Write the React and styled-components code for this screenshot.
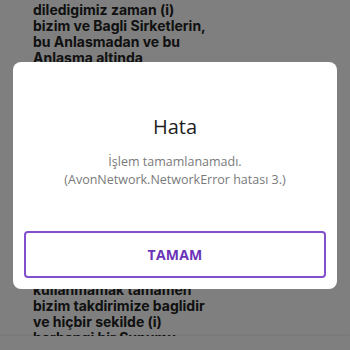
import React from "react";
import styled, { createGlobalStyle } from "styled-components";

const GlobalStyle = createGlobalStyle`
	html, body {
		margin: 0;
		padding: 0;
		background: #ffffff;
		overflow: hidden;
	}
	body {
		font-family: "Open Sans", "Liberation Sans", sans-serif;
	}
`;

const Page = styled.div`
	width: 350px;
	height: 350px;
	overflow: hidden;
	padding: 2px 0 0 33px;
	box-sizing: border-box;
`;

const Paragraph = styled.div`
	font-family: Inter, "Open Sans", sans-serif;
	font-size: 14px;
	font-weight: 700;
	line-height: 16px;
	color: #222222;
	margin-top: ${(p) => p.$gap || 0}px;
`;

const Line = styled.div`
	white-space: nowrap;
`;

const BottomBar = styled.div`
	position: fixed;
	left: 0;
	right: 0;
	bottom: 0;
	height: 14px;
	background: #ffffff;
	box-shadow: 0 -1px 2px rgba(0, 0, 0, 0.08);
`;

const Overlay = styled.div`
	position: fixed;
	inset: 0;
	background: rgba(0, 0, 0, 0.5);
	display: flex;
	align-items: center;
	justify-content: center;
`;

const Dialog = styled.div`
	width: 324px;
	background: #ffffff;
	border-radius: 8px;
	box-sizing: border-box;
	padding: 53px 11px 11px;
	display: flex;
	flex-direction: column;
	align-items: center;
`;

const Title = styled.div`
	font-size: 20px;
	line-height: 24px;
	color: #1e1e1e;
	font-weight: 400;
`;

const Message = styled.div`
	margin-top: 14px;
	font-size: 12.5px;
	line-height: 18px;
	color: #7a7a7a;
	text-align: center;
`;

const Button = styled.button`
	margin-top: 42px;
	width: 100%;
	height: 47px;
	border: 2px solid #8250cc;
	border-radius: 4px;
	background: #ffffff;
	color: #6a33b8;
	font-family: "Open Sans", "Liberation Sans", sans-serif;
	font-size: 14px;
	font-weight: 700;
	letter-spacing: 0.2px;
	cursor: pointer;
`;

const hiddenTop = [
	"altinda haklarimizi",
	"kullanmaya, Sunumu",
	"degistirmeye veya",
	"sonlandirmaya karar",
	"verebiliriz. Bu",
	"haklarimizi kullanmak",
	"veya sinirlamak",
	"bizim icin bir",
	"yukumluluk degildir",
	"ve bu haklari",
];

const hiddenBottom = ["kullanmak veya", "Sunumu kullanmak", "ya da hiçbir zaman"];

export default function App() {
	return (
		<>
			<GlobalStyle />
			<Page>
				<Paragraph>
					<Line>diledigimiz zaman (i)</Line>
					<Line>bizim ve Bagli Sirketlerin,</Line>
					<Line>bu Anlasmadan ve bu</Line>
					<Line>Anlasma altinda</Line>
					{hiddenTop.map((t) => (
						<Line key={t}>{t}</Line>
					))}
				</Paragraph>
				<Paragraph $gap={8}>
					{hiddenBottom.map((t) => (
						<Line key={t}>{t}</Line>
					))}
					<Line>kullanmamak tamamen</Line>
					<Line>bizim takdirimize baglidir</Line>
					<Line>ve hiçbir sekilde (i)</Line>
					<Line>herhangi bir Sunumu</Line>
				</Paragraph>
			</Page>
			<BottomBar />
			<Overlay>
				<Dialog>
					<Title>Hata</Title>
					<Message>
						İşlem tamamlanamadı.
						<br />
						(AvonNetwork.NetworkError hatası 3.)
					</Message>
					<Button>TAMAM</Button>
				</Dialog>
			</Overlay>
		</>
	);
}
